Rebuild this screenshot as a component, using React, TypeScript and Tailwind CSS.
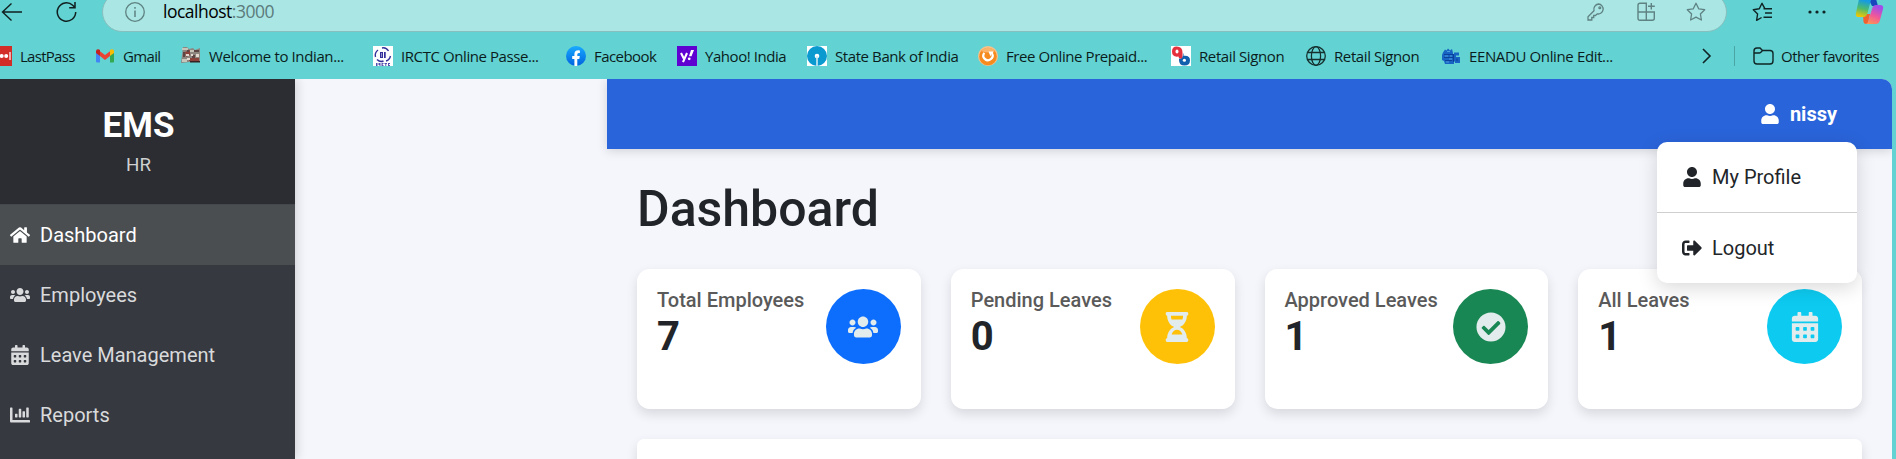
import type { ReactNode } from "react";
import {
  FaCalendarAlt,
  FaChartBar,
  FaCheckCircle,
  FaHome,
  FaHourglassHalf,
  FaSignOutAlt,
  FaUser,
  FaUsers,
} from "react-icons/fa";

function LastPassIcon() {
  return (
    <svg width="20" height="20" viewBox="0 0 20 20">
      <rect width="20" height="20" fill="#d32d27" />
      <circle cx="5" cy="10" r="2" fill="#fff" />
      <circle cx="9.700" cy="10" r="2" fill="#fff" />
      <circle cx="14.200" cy="10" r="2" fill="#fff" />
      <rect x="17.400" y="6" width="1.200" height="8" fill="#fff" />
    </svg>
  );
}

function GmailIcon() {
  return (
    <svg width="20" height="20" viewBox="0 0 20 20">
      <path d="M1 5v10.200q0 1.300 1.300 1.300H5V9z" fill="#4285f4" />
      <path d="M19 5v10.200q0 1.300-1.300 1.300H15V9z" fill="#34a853" />
      <path d="M5 5.200l5 3.800 5-3.800V10l-5 3.900L5 10z" fill="#ea4335" />
      <path d="M1 5.200Q1 3.200 3 3.200q1 0 2 .9V10L1 7z" fill="#c5221f" />
      <path d="M19 5.200q0-2-2-2-1 0-2 .9V10l4-3z" fill="#fbbc04" />
    </svg>
  );
}

function TrainIcon() {
  return (
    <svg width="20" height="20" viewBox="0 0 20 20">
      <path d="M2 1h4l2 2 4-1 2 2 5-2v14H9l-9 1 1-8z" fill="#8d8780" />
      <path d="M1 2h6v2H1zM9 4h4v2H9zM1 13h5v3H1z" fill="#c8c5bb" />
      <path d="M4 6l5-2v5l-4 2zM8 12h10v3H8z" fill="#8a423a" />
      <path d="M2 6h2v5H2zM6 4h2v2H6zM13 4h5v2h-5zM11 9h3v3h-3z" fill="#5c4744" />
      <path d="M5 8h3v2H5zM10 8h2v2h-2zM15 8h3v3h-3zM6 12h3v2H6z" fill="#e4d9cf" />
      <path d="M9 15h10v1.500H9z" fill="#372022" />
    </svg>
  );
}

function IrctcIcon() {
  return (
    <svg width="20" height="20" viewBox="0 0 20 20">
      <rect width="20" height="20" fill="#fff" />
      <path d="M5 4A7.500 7 0 0 0 2.500 11M9 2q4-1 6.500 3M17.500 10q-1 4-4.500 5M4 13.500q3 3 6.500 1.500" fill="none" stroke="#33309a" strokeWidth="1.400" />
      <path d="M7 6h3v6H7zM11 6h1.700v6H11z" fill="#33309a" />
      <path d="M8 7.500h1v1H8zM8 9.500h1v1H8z" fill="#fff" />
      <path d="M3 17h1.500v3H3zM5.500 17h2v3h-1v-1h-1zM8.500 17h2v1H9.700v1h.8v1h-2zM11.500 17h2.500v1h-.7v2h-1v-2h-.8zM15 17h2v1h-1v1h1v1h-2z" fill="#514eaf" />
    </svg>
  );
}

function FacebookIcon() {
  return (
    <svg width="20" height="20" viewBox="0 0 20 20">
      <defs>
        <linearGradient id="facebook" x1="0" y1="0" x2="0" y2="1">
          <stop offset="0" stopColor="#19aaff" />
          <stop offset="1" stopColor="#0062df" />
        </linearGradient>
      </defs>
      <circle cx="10" cy="10" r="10" fill="url(#facebook)" />
      <path d="M8.400 20v-7H6.200v-2.900h2.200V8.200q0-4 3.900-4 1 0 1.600.2v2.500h-1.200q-1.400 0-1.400 1.500v1.700h2.500l-.5 2.900h-2V20z" fill="#fff" />
    </svg>
  );
}

function YahooIcon() {
  return (
    <svg width="20" height="20" viewBox="0 0 20 20">
      <rect width="20" height="20" fill="#5f01d1" />
      <path d="M4 7l2.800 5.500M10 7l-4 9.200" stroke="#fff" strokeWidth="2.100" fill="none" />
      <path d="M14 4h3l-2.500 6.200H12z" fill="#fff" />
      <circle cx="12.200" cy="12.800" r="1.400" fill="#fff" />
    </svg>
  );
}

function BankIcon() {
  return (
    <svg width="20" height="20" viewBox="0 0 20 20">
      <rect width="20" height="20" fill="#fff" />
      <circle cx="10" cy="10" r="10" fill="#0b9ad0" />
      <circle cx="10" cy="10" r="2.300" fill="#fff" />
      <rect x="9.200" y="10" width="1.600" height="10" fill="#cfeaf5" />
    </svg>
  );
}

function RechargeIcon() {
  return (
    <svg width="20" height="20" viewBox="0 0 20 20">
      <circle cx="10" cy="10" r="10" fill="#f9c18a" />
      <circle cx="10" cy="10.500" r="8.800" fill="#f58a1f" />
      <path d="M3 5a9 9 0 0 1 14 0q-6 3-14 0z" fill="#fbb469" />
      <path d="M6.300 6.800a4.600 4.600 0 1 0 7.600.4" fill="none" stroke="#fff" strokeWidth="2.200" />
      <path d="M10.500 5.500h5l-.8 2.500-1.500 0-.7 2.500z" fill="#fff" />
    </svg>
  );
}

function RetailIcon() {
  return (
    <svg width="20" height="20" viewBox="0 0 20 20">
      <rect width="20" height="20" fill="#fff" />
      <path d="M5.700 0.500Q11.500 0.500 11.500 6.500V13Q7.500 13 7.500 10.500Q1 11.500 1 5.500Q1 0.500 5.700 0.500z" fill="#e5313d" />
      <ellipse cx="6" cy="5.600" rx="1.500" ry="2" fill="#fff" />
      <path d="M12.500 7.500v2.300q6.500-.8 6.500 4.400 0 5.300-5.500 5.300T8 14v-1.500q4 1.500 4-5z" fill="#125fad" />
      <ellipse cx="13.400" cy="14.300" rx="1.600" ry="1.500" fill="#fff" />
    </svg>
  );
}

function GlobeIcon() {
  return (
    <svg width="20" height="20" viewBox="0 0 20 20" fill="none" stroke="#15302f" strokeWidth="1.300">
      <circle cx="10" cy="10" r="9.300" />
      <ellipse cx="10" cy="10" rx="4.600" ry="9.300" />
      <path d="M1.500 6.500h17M1.500 13.500h17" />
    </svg>
  );
}

function NewspaperIcon() {
  return (
    <svg width="20" height="20" viewBox="0 0 20 20">
      <path d="M2 6.500l2-3 1.500 1 1.500-2 2 2 2-1.500 1 4v1h1V6.500h5v3h-3v1.500h4v6h-5v-1.500h-1V18H4l-1-3-2-1V9z" fill="#1764c4" />
      <path d="M3 8.500h9M3 11.500h9M4 14.500h7M12.500 8v8M16 12.500v2.500" stroke="#0b419b" strokeWidth="1.100" />
      <path d="M4 10h3M8 13h3M5 16h3M6 5.500h3M9 10h2" stroke="#4c9ddc" strokeWidth="1.200" />
    </svg>
  );
}

type Bookmark = { label: string; icon: ReactNode; width: string; tracking: string };

const bookmarks: Bookmark[] = [
  { label: "LastPass", icon: <LastPassIcon />, width: "w-[103px]", tracking: "tracking-[-0.72px]" },
  { label: "Gmail", icon: <GmailIcon />, width: "w-[86px]", tracking: "tracking-[-0.65px]" },
  { label: "Welcome to Indian...", icon: <TrainIcon />, width: "w-[192px]", tracking: "tracking-[-0.38px]" },
  { label: "IRCTC Online Passe...", icon: <IrctcIcon />, width: "w-[193px]", tracking: "tracking-[-0.42px]" },
  { label: "Facebook", icon: <FacebookIcon />, width: "w-[111px]", tracking: "tracking-[-0.55px]" },
  { label: "Yahoo! India", icon: <YahooIcon />, width: "w-[130px]", tracking: "tracking-[-0.45px]" },
  { label: "State Bank of India", icon: <BankIcon />, width: "w-[171px]", tracking: "tracking-[-0.41px]" },
  { label: "Free Online Prepaid...", icon: <RechargeIcon />, width: "w-[193px]", tracking: "tracking-[-0.42px]" },
  { label: "Retail Signon", icon: <RetailIcon />, width: "w-[135px]", tracking: "tracking-[-0.4px]" },
  { label: "Retail Signon", icon: <GlobeIcon />, width: "w-[135px]", tracking: "tracking-[-0.4px]" },
  { label: "EENADU Online Edit...", icon: <NewspaperIcon />, width: "w-[200px]", tracking: "tracking-[-0.37px]" },
];

const starPath =
  "M10 1.300l2.700 5.500 6 .9-4.300 4.300 1 6-5.400-2.900L4.600 18l1-6L1.300 7.700l6-.9z";

function CopilotIcon() {
  return (
    <svg width="29" height="28" viewBox="0 0 29 28">
      <defs>
        <linearGradient id="copilotLeft" x1="0.500" y1="0" x2="0.300" y2="1">
          <stop offset="0.200" stopColor="#159be4" />
          <stop offset="0.600" stopColor="#4dbb6c" />
          <stop offset="1" stopColor="#f4c800" />
        </linearGradient>
        <linearGradient id="copilotRight" x1="0.700" y1="0" x2="0.300" y2="1">
          <stop offset="0.100" stopColor="#a24de8" />
          <stop offset="0.550" stopColor="#f0579a" />
          <stop offset="1" stopColor="#ff9257" />
        </linearGradient>
      </defs>
      <path d="M12 0h5q3 0 4 3l2 7h-6z" fill="#1746bd" />
      <path d="M8 18h7l-2 9q-.5 1-2 1-2 0-2.500-2z" fill="#f2602f" />
      <path d="M6 0h12q-1 0-1.500 2l-4 15q-1 4-4 4H4q-4 0-3-4L4 3q.6-2 2-3z" fill="url(#copilotLeft)" />
      <path d="M21 9h4q4 0 3 4l-3 11q-1 4-4 4H10q2.500 0 3-2l4-13q1-4 4-4z" fill="url(#copilotRight)" />
    </svg>
  );
}

function AddressRow() {
  return (
    <div className="flex h-8 items-start">
      <div className="flex h-6 w-[102px] shrink-0 items-center">
        <svg className="ml-px" width="22" height="20" viewBox="0 0 22 20" fill="none" stroke="#112020" strokeWidth="1.400">
          <path d="M21 10H1.500M10.500 1.500L1.500 10l9 8.500" />
        </svg>
        <svg className="ml-[33px]" width="21" height="22" viewBox="0 0 21 22" fill="none" stroke="#111f20" strokeWidth="1.500">
          <path d="M19.700 11a9.200 9.200 0 1 1-3-6.800L19 6.600M19 1v5.700h-5.800" />
        </svg>
      </div>
      <div className="-mt-2 flex h-10 w-[1625px] shrink-0 items-center rounded-[20px] border border-[#87bfbe] bg-[#a9e6e4] pl-[22px] pr-[20px]">
        <svg width="20" height="20" viewBox="0 0 20 20" fill="none" stroke="#5f8282" strokeWidth="1.300">
          <circle cx="10" cy="10" r="9.300" />
          <path d="M10 8.500V15M10 5v1.700" strokeWidth="1.500" />
        </svg>
        <span className="ml-[18px] mt-[-1px] font-['Open_Sans','Noto_Sans',sans-serif] text-[17.500px] tracking-[-0.500px] text-black">
          localhost<span className="text-[#5c7b7b]">:3000</span>
        </span>
        <div className="ml-auto flex items-center text-[#5f8282]">
          <svg width="18" height="18" viewBox="0 0 18 18" fill="none" stroke="currentColor" strokeWidth="1.300">
            <path d="M11.500 1a5 5 0 1 1-1.300 9.900L8.500 12.500H6.700v2H4.800V17H1v-3.300l6-6A5.300 5.300 0 0 1 11.500 1z" />
            <circle cx="12.800" cy="4.800" r="0.900" />
          </svg>
          <svg className="ml-[32px]" width="20" height="20" viewBox="0 0 20 20" fill="none" stroke="currentColor" strokeWidth="1.400">
            <path d="M9.300 18.300H3q-2 0-2-2V3.300q0-2 2-2h6.300zM1 10h16.300v6.300q0 2-2 2h-6M14.300 1v6.500M11 4.300h6.800" />
          </svg>
          <svg className="ml-[29px]" width="20" height="20" viewBox="0 0 20 20" fill="none" stroke="currentColor" strokeWidth="1.300" strokeLinejoin="round">
            <path d={starPath} />
          </svg>
        </div>
      </div>
      <div className="flex h-6 items-center">
        <svg className="ml-[25px]" width="21" height="20" viewBox="0 0 21 20" fill="none" stroke="#102425" strokeWidth="1.400" strokeLinejoin="round">
          <path d="M14 6.800h-1L10 1.300 7.300 6.800l-6 .9L5.600 12l-1 6.300 5-2.800M11.500 6.800H20M13 11h7M11.500 15.300H20" />
        </svg>
        <svg className="ml-[35px]" width="18" height="4" viewBox="0 0 18 4" fill="#102425">
          <circle cx="2" cy="2" r="1.600" />
          <circle cx="9" cy="2" r="1.600" />
          <circle cx="16" cy="2" r="1.600" />
        </svg>
        <div className="-mt-1 ml-[29px] h-[28px]">
          <CopilotIcon />
        </div>
      </div>
    </div>
  );
}

function BookmarksRow() {
  return (
    <div className="flex h-[47px] items-center pb-px font-['Open_Sans','Noto_Sans',sans-serif] text-[15px] text-[#0b1c1c]">
      <div className="-ml-2 flex shrink-0 pt-[2px]">
        {bookmarks.map((b, i) => (
          <div key={i} className={`flex shrink-0 items-center gap-2 whitespace-nowrap ${b.width}`}>
            <span className="shrink-0">{b.icon}</span>
            <span className={b.tracking}>{b.label}</span>
          </div>
        ))}
      </div>
      <svg className="ml-[60px] mt-[2px]" width="12" height="16" viewBox="0 0 12 16" fill="none" stroke="#102425" strokeWidth="1.600">
        <path d="M2 1l7 7-7 7" />
      </svg>
      <div className="ml-[21px] mt-[2px] h-5 w-px bg-[#4ba5a5]" />
      <svg className="ml-[18px] mt-[2px]" width="21" height="18" viewBox="0 0 21 18" fill="none" stroke="#102425" strokeWidth="1.400">
        <path d="M1 4q0-3 3-3h3l2.500 2.500H17q3 0 3 3V14q0 3-3 3H4q-3 0-3-3zM1 6h5.500q1 0 3-2.500" />
      </svg>
      <span className="ml-[7px] mt-[2px] whitespace-nowrap tracking-[-0.500px]">Other favorites</span>
    </div>
  );
}

const navItems = [
  { label: "Dashboard", icon: FaHome, active: true },
  { label: "Employees", icon: FaUsers, active: false },
  { label: "Leave Management", icon: FaCalendarAlt, active: false },
  { label: "Reports", icon: FaChartBar, active: false },
];

function Sidebar() {
  return (
    <aside className="flex w-[295px] shrink-0 flex-col bg-[#363940] shadow-[2px_0_10px_rgba(0,0,0,0.15)]">
      <div className="flex h-[126px] shrink-0 flex-col items-center border-b border-[#45484c] bg-[#2b2d32] pr-[18px] pt-[26px]">
        <div className="text-[35px] font-bold leading-[42px] text-white">EMS</div>
        <div className="mt-[4px] text-[18.750px] leading-[28px] text-[#cfd0d1]">HR</div>
      </div>
      <nav className="flex flex-col">
        {navItems.map(({ label, icon: Icon, active }) => (
          <div
            key={label}
            className={`flex h-[60px] items-center gap-2.5 pl-2.5 text-[20px] ${
              active ? "bg-[#4a4e51] text-white" : "text-[#d9dadb]"
            }`}
          >
            <Icon size={20} />
            <span>{label}</span>
          </div>
        ))}
      </nav>
    </aside>
  );
}

const stats = [
  { label: "Total Employees", value: 7, icon: FaUsers, color: "bg-[#0d6efd]" },
  { label: "Pending Leaves", value: 0, icon: FaHourglassHalf, color: "bg-[#ffc107]" },
  { label: "Approved Leaves", value: 1, icon: FaCheckCircle, color: "bg-[#198754]" },
  { label: "All Leaves", value: 1, icon: FaCalendarAlt, color: "bg-[#0dcaf0]" },
];

function UserMenu() {
  return (
    <div className="absolute right-[35px] top-[63px] z-10 w-[200px] rounded-[10px] bg-white text-[20px] text-[#212529] shadow-[0_5px_19px_rgba(0,0,0,0.15)]">
      <div className="flex h-[71px] items-center gap-2.5 border-b border-[#cfcfcf] pl-[25px]">
        <FaUser size={20} />
        <span>My Profile</span>
      </div>
      <div className="flex h-[70px] items-center gap-2.5 pl-[25px]">
        <FaSignOutAlt size={20} />
        <span>Logout</span>
      </div>
    </div>
  );
}

function Main() {
  return (
    <main className="ml-[312px] flex min-w-0 flex-1 flex-col">
      <header className="relative flex h-[70px] shrink-0 items-center justify-end bg-[#2a64da] pr-[55px] text-white shadow-[0_2px_10px_rgba(0,0,0,0.15)]">
        <FaUser size={20} />
        <span className="ml-2.5 text-[20px] font-bold">nissy</span>
        <UserMenu />
      </header>
      <div className="px-[30px] pt-[30px]">
        <h1 className="text-[50px] font-medium leading-[60px] text-[#212529]">Dashboard</h1>
        <div className="mt-[30px] grid grid-cols-4 gap-[30px]">
          {stats.map(({ label, value, icon: Icon, color }) => (
            <div
              key={label}
              className="flex h-[140px] items-start justify-between rounded-[12.500px] bg-white p-5 shadow-[0_5px_12px_rgba(0,0,0,0.12)]"
            >
              <div>
                <div className="mt-[-1px] text-[20px] font-medium leading-6 text-[#5a5a5a]">{label}</div>
                <div className="mt-[1px] text-[40px] font-bold leading-[48px] text-[#212529]">{value}</div>
              </div>
              <div className={`flex size-[75px] shrink-0 items-center justify-center rounded-full text-[#e3ecec] ${color}`}>
                <Icon size={30} />
              </div>
            </div>
          ))}
        </div>
        <div className="mt-[30px] h-[200px] rounded-[7px] bg-white shadow-[0_5px_12px_rgba(0,0,0,0.12)]" />
      </div>
    </main>
  );
}

export default function App() {
  return (
    <div className="flex h-[459px] w-[1896px] flex-col overflow-hidden bg-[#62d2d2]">
      <AddressRow />
      <BookmarksRow />
      <div className="flex h-[380px] w-[1892px] overflow-hidden rounded-tr-[10px] bg-[#f5f6fb] font-[Roboto,sans-serif]">
        <Sidebar />
        <Main />
      </div>
    </div>
  );
}
